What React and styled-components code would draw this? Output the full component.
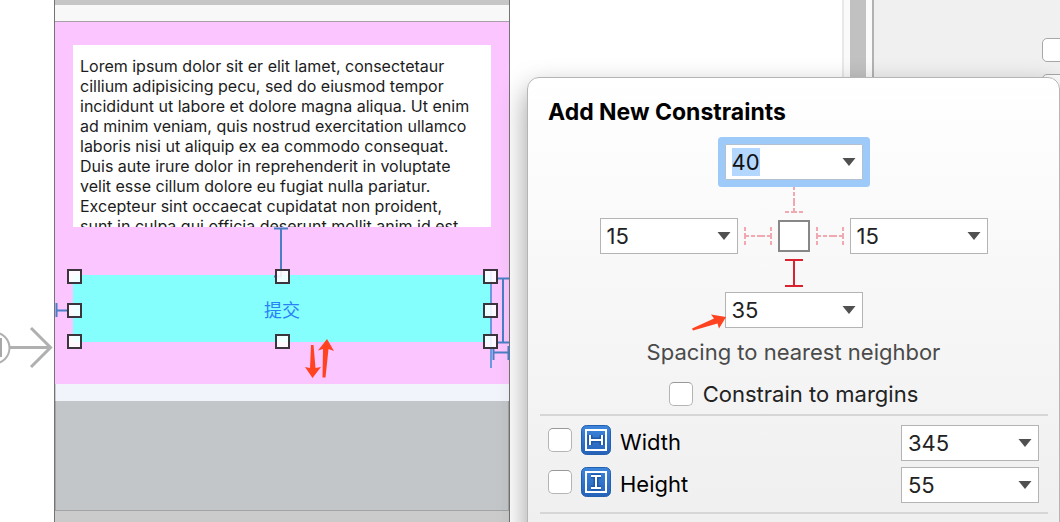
import { useEffect, useRef } from 'react';
import styled, { createGlobalStyle } from 'styled-components';

const GlobalStyle = createGlobalStyle`
  * {
    box-sizing: border-box;
  }

  body {
    margin: 0;
    background: #fff;
    font-family: Inter, 'Noto Sans CJK SC', sans-serif;
  }
`;

const Page = styled.main`
  position: relative;
  display: flex;
  height: 100vh;
  overflow: hidden;
`;

const EntryPoint = styled.div`
  flex: none;
  width: 54px;
  padding-top: 324px;

  svg {
    display: block;
  }
`;

const Device = styled.section`
  flex: none;
  display: flex;
  flex-direction: column;
  width: 456px;
  border: solid #747474;
  border-width: 0 1px;
  background: #cbcbcb;
`;

const StatusBar = styled.div`
  height: 22px;
  border-top: 5px solid #c6c6c6;
  border-bottom: 1px solid #a79fa9;
  background: #f8f8f8;
`;

const RootView = styled.div`
  position: relative;
  display: flex;
  flex-direction: column;
  gap: 48px;
  padding: 23px 18px 42px;
  background: #fbc6ff;
`;

const TextView = styled.p`
  height: 182px;
  margin: 0;
  padding: 11px 7px 0;
  overflow: hidden;
  background: #fff;
  color: #1c1c1c;
  font-size: 16px;
  line-height: 20px;
  white-space: nowrap;
`;

const SubmitButton = styled.button`
  height: 67px;
  padding: 0;
  border: 0;
  background: #84fffe;
  color: #2a80f5;
  font-family: 'Noto Sans CJK SC', sans-serif;
  font-size: 18px;
`;

const Guides = styled.svg`
  position: absolute;
  inset: 0;
  width: 100%;
  height: 100%;
  overflow: visible;
  pointer-events: none;
`;

const BottomInset = styled.div`
  height: 17px;
  margin-left: 1px;
  background: #f1f5fb;
`;

const Keyboard = styled.div`
  height: 110px;
  border: solid #a3a4a5;
  border-width: 0 1px 1px;
  background: #c3c6c9;
`;

const Canvas = styled.div`
  flex: 1;
`;

const ScrollGutter = styled.div`
  flex: none;
  width: 30px;
  padding: 0 6px;
  border-left: 2px solid #e8e8e8;
  background: #fafafa;

  &::before {
    content: '';
    display: block;
    height: 100%;
    background: #c1c1c1;
  }
`;

const Inspector = styled.aside`
  flex: none;
  display: flex;
  flex-direction: column;
  align-items: flex-end;
  gap: 12px;
  width: 188px;
  padding-top: 38px;
  border-left: 2px solid #b2b2b2;
  background: #f0f0f0;
`;

const InspectorBox = styled.input`
  appearance: none;
  width: 24px;
  height: 24px;
  margin: 0 -6px 0 0;
  border: 1px solid #a8a8a8;
  border-radius: 5px;
  background: #fff;
`;

const Popover = styled.section`
  position: absolute;
  top: 77px;
  right: 0;
  display: flex;
  flex-direction: column;
  width: 533px;
  height: 520px;
  border: 1px solid #b5b5b5;
  border-radius: 12px;
  background: linear-gradient(#fff, #efefef 450px);
  box-shadow: 0 12px 28px rgba(0, 0, 0, 0.4);
`;

const Title = styled.h1`
  margin: 20px 20px 18px;
  color: #000;
  font-size: 23px;
  line-height: 28px;
`;

const Pins = styled.div`
  display: flex;
  flex-direction: column;
  align-items: center;
  gap: 5px;
`;

const PinRow = styled.div`
  display: flex;
  align-items: center;
  gap: 6px;
`;

const StyledCombo = styled.div`
  position: relative;
  display: flex;
  width: 138px;
  height: 36px;
  border: 1px solid #b4b4b4;
  background: #fff;

  &:focus-within {
    box-shadow: 0 0 0 7px #9ecafa;
    border-color: #b3c0cf;
    border-radius: 1px;
  }
`;

const ComboInput = styled.input`
  width: 100px;
  padding: 0 0 0 6px;
  border: 0;
  outline: 0;
  background: none;
  color: #222;
  font-family: inherit;
  font-size: 22px;
  line-height: 28px;

  &::selection {
    background: rgba(179, 215, 255, 0.99);
    color: #111;
  }
`;

const ComboButton = styled.button`
  display: flex;
  align-items: center;
  justify-content: flex-end;
  flex: 1;
  padding: 0 6px 0 0;
  border: 0;
  background: none;
`;

const PinBox = styled.span`
  width: 32px;
  height: 32px;
  border: 2px solid #878787;
  background: #fff;
`;

const Hint = styled.p`
  margin: 9px 0 0;
  color: #4a4a4a;
  font-size: 22px;
  line-height: 30px;
  text-align: center;
`;

const Check = styled.label`
  display: flex;
  align-items: center;
  gap: 10px;
  color: #222;
  font-size: 22px;
  line-height: 30px;
`;

const CheckInput = styled.input`
  appearance: none;
  flex: none;
  width: 24px;
  height: 24px;
  margin: 0;
  border: 1px solid #b4b4b4;
  border-top-color: #999;
  border-radius: 5px;
  background: #fff;
`;

const MarginsRow = styled.div`
  display: flex;
  justify-content: center;
  margin: 12px 0 5px;
`;

const SizeRows = styled.div`
  display: flex;
  flex-direction: column;
  gap: 6px;
  margin: 0 11px 0 12px;
  padding: 9px 9px 9px 8px;
  border: solid #d6d6d6;
  border-width: 2px 0;
`;

const SizeRow = styled.div`
  display: flex;
  align-items: flex-start;
  justify-content: space-between;
`;

const SizeLabel = styled(Check)`
  align-items: flex-start;
  gap: 9px;
  color: #000;

  ${CheckInput} {
    margin-top: 3px;
  }

  span {
    padding-top: 2px;
  }
`;

const RedArrow = styled.svg`
  position: absolute;
  top: 20px;
  right: 100%;
`;

const LOREM = [
  'Lorem ipsum dolor sit er elit lamet, consectetaur',
  'cillium adipisicing pecu, sed do eiusmod tempor',
  'incididunt ut labore et dolore magna aliqua. Ut enim',
  'ad minim veniam, quis nostrud exercitation ullamco',
  'laboris nisi ut aliquip ex ea commodo consequat.',
  'Duis aute irure dolor in reprehenderit in voluptate',
  'velit esse cillum dolore eu fugiat nulla pariatur.',
  'Excepteur sint occaecat cupidatat non proident,',
  'sunt in culpa qui officia deserunt mollit anim id est',
];

const HANDLES = [
  [19, 254],
  [227, 254],
  [435, 254],
  [19, 288],
  [435, 288],
  [19, 319],
  [227, 319],
  [435, 319],
];

function Combo({ label, value, selected, children }) {
  const input = useRef(null);

  useEffect(() => {
    if (selected) {
      input.current.focus();
      input.current.select();
    }
  }, [selected]);

  return (
    <StyledCombo>
      <ComboInput ref={input} aria-label={label} defaultValue={value} />
      <ComboButton type="button" aria-label={`${label} options`}>
        <svg width="14" height="8" viewBox="0 0 14 8">
          <path d="M0.5 0h13L7 8z" fill="#505050" />
        </svg>
      </ComboButton>
      {children}
    </StyledCombo>
  );
}

function Strut({ vertical, active }) {
  return (
    <svg
      width={vertical ? 18 : 28}
      height={vertical ? 28 : 18}
      viewBox={vertical ? '0 0 18 28' : '0 0 28 18'}
      fill="none"
      stroke={active ? '#d9232e' : '#f0a9b1'}
      strokeWidth="2"
    >
      {vertical ? (
        <>
          <path d="M0 1h18M0 27h18" strokeDasharray={active ? 'none' : '4 2 6 2 4 0'} />
          <path d="M9 2v24" strokeDasharray={active ? 'none' : '3 2 4 2 8 2'} />
        </>
      ) : (
        <>
          <path d="M1 0v18M27 0v18" strokeDasharray="4 2 6 2 4 0" />
          <path d="M2 9h24" strokeDasharray="3 2 4 2 8 2" />
        </>
      )}
    </svg>
  );
}

function SizeIcon({ vertical }) {
  const bar = vertical ? 'M10 9h10M15 9v12M10 21h10' : 'M9 10v10M9 15h12M21 10v10';

  return (
    <svg width="30" height="30" viewBox="0 0 30 30" fill="none">
      <defs>
        <linearGradient id="badge" x1="0" y1="0" x2="0" y2="1">
          <stop offset="0" stopColor="#3d86dc" />
          <stop offset="1" stopColor="#2562b8" />
        </linearGradient>
      </defs>
      <rect x="0.5" y="0.5" width="29" height="29" rx="5" fill="url(#badge)" stroke="#2460b0" />
      <rect x="5" y="5" width="20" height="20" stroke="#fff" strokeWidth="2" />
      <path d={bar} stroke="#1f57ab" strokeWidth="5" />
      <path d={bar} stroke="#fff" strokeWidth="2" />
    </svg>
  );
}

function LayoutGuides() {
  return (
    <Guides>
      <g fill="none" stroke="#4a7fc6" strokeWidth="2">
        <path d="M219 206.500h14M226 207v47M219 254.500h8" />
        <path d="M1.500 281v14M2 288.500h12" />
        <path d="M436 248v98" stroke="#6a9be0" />
        <path d="M441 256.500h13M441 320.500h13M448 257v63" />
        <path d="M438.500 324v14M453.500 324v14M439 330.500h14" />
      </g>
      {HANDLES.map(([x, y]) => (
        <rect
          key={`${x}-${y}`}
          x={x - 6}
          y={y - 6}
          width="13"
          height="13"
          fill="#fff"
          fillOpacity="0.88"
          stroke="#3b343c"
          strokeWidth="2"
        />
      ))}
      <g fill="#ff4320">
        <path d="M256 323h2.500l2 23 5.500-1-8.500 11-7.500-11 5 1z" />
        <path d="M272 317l7 12-5.500-2-3 28.500h-3l.5-28.500-5 1.500z" />
      </g>
    </Guides>
  );
}

export default function App() {
  return (
    <>
      <GlobalStyle />
      <Page>
        <EntryPoint>
          <svg width="54" height="46" viewBox="0 0 54 46" fill="none" stroke="#b0b0b0" strokeWidth="3">
            <circle cx="-6" cy="24" r="15.500" strokeWidth="2" />
            <path d="M0 14v19" stroke="#a8a8a8" strokeWidth="4" />
            <path d="M10 23.500h40M31 4l19.500 19.500L31 43" />
          </svg>
        </EntryPoint>
        <Device>
          <StatusBar />
          <RootView>
            <TextView>
              {LOREM.map((line) => (
                <span key={line}>
                  {line}
                  <br />
                </span>
              ))}
            </TextView>
            <SubmitButton type="button">提交</SubmitButton>
            <LayoutGuides />
          </RootView>
          <BottomInset />
          <Keyboard />
        </Device>
        <Canvas />
        <ScrollGutter />
        <Inspector>
          <InspectorBox type="checkbox" aria-label="First option" />
          <InspectorBox type="checkbox" aria-label="Second option" />
        </Inspector>

        <Popover>
          <Title>Add New Constraints</Title>
          <Pins>
            <Combo label="Top" value="40" selected />
            <Strut vertical />
            <PinRow>
              <Combo label="Leading" value="15" />
              <Strut />
              <PinBox />
              <Strut />
              <Combo label="Trailing" value="15" />
            </PinRow>
            <Strut vertical active />
            <Combo label="Bottom" value="35">
              <RedArrow width="34" height="18" viewBox="0 0 34 18" fill="#ff4320">
                <path d="M0 15.500L22 5.500l-3-4L34 4l-7 11.500-1.500-5L1 17.500z" />
              </RedArrow>
            </Combo>
          </Pins>
          <Hint>Spacing to nearest neighbor</Hint>
          <MarginsRow>
            <Check>
              <CheckInput type="checkbox" />
              Constrain to margins
            </Check>
          </MarginsRow>
          <SizeRows>
            <SizeRow>
              <SizeLabel>
                <CheckInput type="checkbox" />
                <SizeIcon />
                <span>Width</span>
              </SizeLabel>
              <Combo label="Width value" value="345" />
            </SizeRow>
            <SizeRow>
              <SizeLabel>
                <CheckInput type="checkbox" />
                <SizeIcon vertical />
                <span>Height</span>
              </SizeLabel>
              <Combo label="Height value" value="55" />
            </SizeRow>
          </SizeRows>
        </Popover>
      </Page>
    </>
  );
}
